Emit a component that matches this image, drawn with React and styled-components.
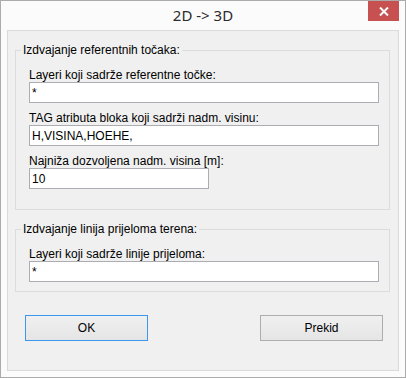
import styled, { createGlobalStyle } from "styled-components";

const GlobalStyle = createGlobalStyle`
  html, body {
    margin: 0;
    padding: 0;
    background: #fbfbfb;
  }
  * {
    box-sizing: border-box;
  }
`;

const App = () => {
  return (
    <>
      <GlobalStyle />
      <Window>
        <TitleBar>
          <span />
          <Title>2D -&gt; 3D</Title>
          <CloseButton aria-label="Zatvori">
            <svg width="10" height="9" viewBox="0 0 10 9">
              <path d="M1 0.5 L9 8.5 M9 0.5 L1 8.5" stroke="#fff" strokeWidth="2" />
            </svg>
          </CloseButton>
        </TitleBar>
        <Client>
          <Group>
            <Legend>Izdvajanje referentnih točaka:</Legend>
            <Fields bottom="20px">
              <Field>
                <Label>Layeri koji sadrže referentne točke:</Label>
                <Input defaultValue="*" />
              </Field>
              <Field>
                <Label>TAG atributa bloka koji sadrži nadm. visinu:</Label>
                <Input defaultValue="H,VISINA,HOEHE," />
              </Field>
              <Field>
                <Label>Najniža dozvoljena nadm. visina [m]:</Label>
                <Input defaultValue="10" width="180px" />
              </Field>
            </Fields>
          </Group>
          <Group>
            <Legend>Izdvajanje linija prijeloma terena:</Legend>
            <Fields bottom="9px">
              <Field>
                <Label>Layeri koji sadrže linije prijeloma:</Label>
                <Input defaultValue="*" />
              </Field>
            </Fields>
          </Group>
          <ButtonRow>
            <Button primary>OK</Button>
            <Button>Prekid</Button>
          </ButtonRow>
        </Client>
      </Window>
    </>
  );
};

export default App;

const Window = styled.div`
  width: 406px;
  height: 378px;
  border: 1px solid #ababab;
  background: #fbfbfb;
  padding: 0 6px 6px 6px;
  display: flex;
  flex-direction: column;
`;

const TitleBar = styled.div`
  height: 29px;
  flex-shrink: 0;
  display: grid;
  grid-template-columns: 1fr auto 1fr;
  align-items: start;
`;

const Title = styled.div`
  font-family: "Noto Sans", "Open Sans", sans-serif;
  font-size: 15px;
  color: #2b2b2b;
  line-height: 29px;
`;

const CloseButton = styled.button`
  justify-self: end;
  width: 31px;
  height: 20px;
  border: none;
  padding: 0;
  background: #c75050;
  display: flex;
  align-items: center;
  justify-content: center;
`;

const Client = styled.div`
  flex: 1;
  background: #f0f0f0;
  border: 1px solid #dadada;
  padding: 19px 8px 0 7px;
  display: flex;
  flex-direction: column;
  gap: 19px;
  font-family: "Liberation Sans", Arial, sans-serif;
  font-size: 12px;
  color: #000;
`;

const Group = styled.div`
  flex-shrink: 0;
  border: 1px solid #dcdcdc;
  padding: 0 10px 0 13px;
  display: flex;
  flex-direction: column;
`;

const Legend = styled.div`
  align-self: flex-start;
  margin: -7px 0 0 -8px;
  padding: 0 2px;
  background: #f0f0f0;
  line-height: 13px;
`;

const Fields = styled.div`
  display: flex;
  flex-direction: column;
  gap: 8px;
  padding: 11px 0 ${({ bottom }) => bottom} 0;
`;

const Field = styled.div`
  display: flex;
  flex-direction: column;
`;

const Label = styled.div`
  line-height: 14px;
`;

const Input = styled.input`
  width: ${({ width }) => width || "350px"};
  height: 21px;
  border: 1px solid #abadb3;
  background: #fff;
  padding: 0 2px;
  font-family: "Liberation Sans", Arial, sans-serif;
  font-size: 12px;
  color: #000;
  outline: none;
`;

const ButtonRow = styled.div`
  display: flex;
  justify-content: space-between;
  padding: 4px 7px 0 10px;
`;

const Button = styled.button`
  width: 123px;
  height: 26px;
  border: 1px solid ${({ primary }) => (primary ? "#3c97f0" : "#adadad")};
  background: linear-gradient(#f0f0f0, #e5e5e5);
  font-family: "Liberation Sans", Arial, sans-serif;
  font-size: 12px;
  color: #000;
  padding: 0;
`;
